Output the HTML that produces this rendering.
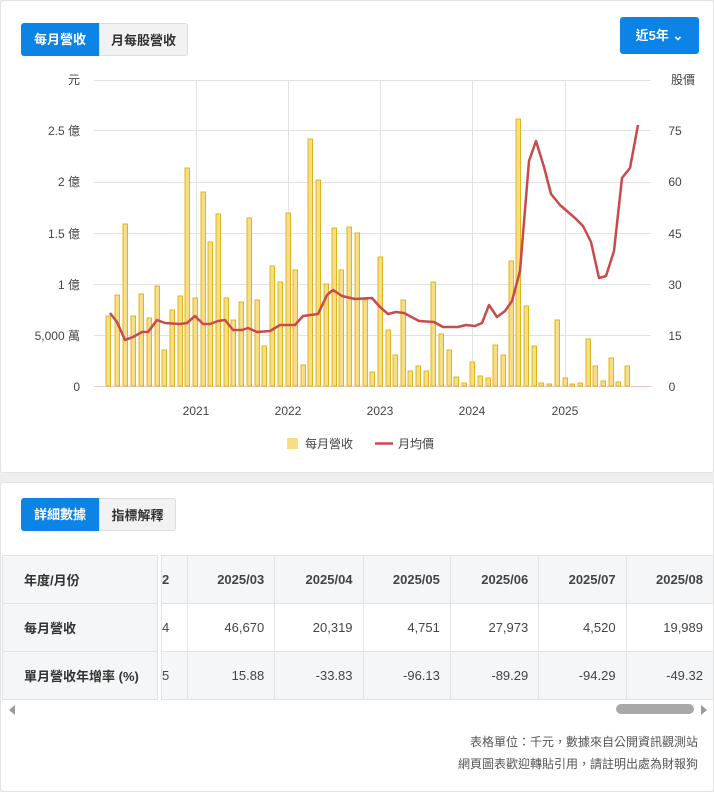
<!DOCTYPE html>
<html><head><meta charset="utf-8"><style>
*{box-sizing:border-box;margin:0;padding:0}
body{width:714px;height:787px;background:#eceeef;font-family:"Liberation Sans","Noto Sans CJK TC",sans-serif;color:#333;position:relative;overflow:hidden}
.card{position:absolute;left:0;width:714px;background:#fff;border:1px solid #e3e3e3;border-radius:3px}
.btn{position:absolute;height:33px;line-height:33px;font-size:13px;font-weight:bold;text-align:center}
.blue{background:#0b84e6;color:#fff}
.grey{background:#f2f2f2;color:#333;border:1px solid #ddd}
table{position:absolute;border-collapse:collapse;font-size:13px}
td{border:1px solid #e3e3e3;height:48px;text-align:right;padding-right:10px;color:#444}
.foot{position:absolute;right:16px;font-size:12px;color:#555}
</style></head><body>
<div class="card" style="top:0;height:473px">
<div class="btn blue" style="left:20px;top:22px;width:78px;border-radius:3px 0 0 3px">每月營收</div>
<div class="btn grey" style="left:98px;top:22px;width:89px;border-radius:0 3px 3px 0">月每股營收</div>
<div class="btn blue" style="left:619px;top:16px;width:79px;height:37px;line-height:37px;border-radius:3px">近5年 ⌄</div>
<svg width="714" height="473" style="position:absolute;left:-1px;top:-1px" font-family="Liberation Sans,Noto Sans CJK TC,sans-serif" font-size="12" fill="#444">
<g stroke="#e2e2e2" stroke-width="1">
<line x1="94" x2="651" y1="80.5" y2="80.5"/><line x1="94" x2="651" y1="130.5" y2="130.5"/><line x1="94" x2="651" y1="182.5" y2="182.5"/><line x1="94" x2="651" y1="233.5" y2="233.5"/><line x1="94" x2="651" y1="284.5" y2="284.5"/><line x1="94" x2="651" y1="335.5" y2="335.5"/>
<line x1="196.5" x2="196.5" y1="80" y2="386"/><line x1="288.5" x2="288.5" y1="80" y2="386"/><line x1="380.5" x2="380.5" y1="80" y2="386"/><line x1="472.5" x2="472.5" y1="80" y2="386"/><line x1="565.5" x2="565.5" y1="80" y2="386"/>
</g>
<line x1="94" x2="651" y1="386.5" y2="386.5" stroke="#e8c6cc"/>
<g text-anchor="end"><text x="80" y="84">元</text><text x="80" y="135">2.5 億</text><text x="80" y="186">2 億</text><text x="80" y="238">1.5 億</text><text x="80" y="289">1 億</text><text x="80" y="340">5,000 萬</text><text x="80" y="391">0</text></g>
<g text-anchor="middle"><text x="683" y="84">股價</text><text x="675" y="135">75</text><text x="675" y="186">60</text><text x="675" y="238">45</text><text x="675" y="289">30</text><text x="675" y="340">15</text><text x="672" y="391">0</text>
<text x="196" y="415">2021</text><text x="288" y="415">2022</text><text x="380" y="415">2023</text><text x="472" y="415">2024</text><text x="565" y="415">2025</text></g>
<g fill="#f7dd86" stroke="#e0b51c" stroke-width="1">
<rect x="106" y="316" width="4.5" height="70"/><rect x="115" y="295" width="4.5" height="91"/><rect x="123" y="224" width="4.5" height="162"/><rect x="131" y="316" width="4.5" height="70"/><rect x="139" y="294" width="4.5" height="92"/><rect x="147" y="318" width="4.5" height="68"/><rect x="155" y="286" width="4.5" height="100"/><rect x="162" y="350" width="4.5" height="36"/><rect x="170" y="310" width="4.5" height="76"/><rect x="178" y="296" width="4.5" height="90"/><rect x="185" y="168" width="4.5" height="218"/><rect x="193" y="298" width="4.5" height="88"/><rect x="201" y="192" width="4.5" height="194"/><rect x="208" y="242" width="4.5" height="144"/><rect x="216" y="214" width="4.5" height="172"/><rect x="224" y="298" width="4.5" height="88"/><rect x="231" y="320" width="4.5" height="66"/><rect x="239" y="302" width="4.5" height="84"/><rect x="247" y="218" width="4.5" height="168"/><rect x="255" y="300" width="4.5" height="86"/><rect x="262" y="346" width="4.5" height="40"/><rect x="270" y="266" width="4.5" height="120"/><rect x="278" y="282" width="4.5" height="104"/><rect x="286" y="213" width="4.5" height="173"/><rect x="293" y="270" width="4.5" height="116"/><rect x="301" y="365" width="4.5" height="21"/><rect x="308" y="139" width="4.5" height="247"/><rect x="316" y="180" width="4.5" height="206"/><rect x="324" y="284" width="4.5" height="102"/><rect x="332" y="228" width="4.5" height="158"/><rect x="339" y="270" width="4.5" height="116"/><rect x="347" y="227" width="4.5" height="159"/><rect x="355" y="233" width="4.5" height="153"/><rect x="363" y="300" width="4.5" height="86"/><rect x="370" y="372" width="4.5" height="14"/><rect x="378" y="257" width="4.5" height="129"/><rect x="386" y="330" width="4.5" height="56"/><rect x="393" y="355" width="4.5" height="31"/><rect x="401" y="300" width="4.5" height="86"/><rect x="408" y="371" width="4.5" height="15"/><rect x="416" y="366" width="4.5" height="20"/><rect x="424" y="371" width="4.5" height="15"/><rect x="431" y="282" width="4.5" height="104"/><rect x="439" y="334" width="4.5" height="52"/><rect x="447" y="350" width="4.5" height="36"/><rect x="454" y="377" width="4.5" height="9"/><rect x="462" y="383" width="4.5" height="3"/><rect x="470" y="362" width="4.5" height="24"/><rect x="478" y="376" width="4.5" height="10"/><rect x="486" y="378" width="4.5" height="8"/><rect x="493" y="345" width="4.5" height="41"/><rect x="501" y="355" width="4.5" height="31"/><rect x="509" y="261" width="4.5" height="125"/><rect x="516" y="119" width="4.5" height="267"/><rect x="524" y="306" width="4.5" height="80"/><rect x="532" y="346" width="4.5" height="40"/><rect x="539" y="383" width="4.5" height="3"/><rect x="547" y="384" width="4.5" height="2"/><rect x="555" y="320" width="4.5" height="66"/><rect x="563" y="378" width="4.5" height="8"/><rect x="570" y="384" width="4.5" height="2"/><rect x="578" y="383" width="4.5" height="3"/><rect x="586" y="339" width="4.5" height="47"/><rect x="593" y="366" width="4.5" height="20"/><rect x="601" y="381" width="4.5" height="5"/><rect x="609" y="358" width="4.5" height="28"/><rect x="616" y="382" width="4.5" height="4"/><rect x="625" y="366" width="4.5" height="20"/>
</g>
<polyline fill="none" stroke="#c94a4a" stroke-width="2.5" stroke-linejoin="round" points="110,313 117,322 125,340 133,337 142,332 148,332 157,320 165,323 180,324 187,323 195,316 203,324 210,324 218,321 225,320 233,330 242,330 248,328 257,332 270,331 280,325 295,325 303,316 318,314 327,295 333,290 342,296 355,299 372,298 380,307 388,314 396,312 404,313 419,321 434,322 443,327 458,327 466,325 475,326 482,323 489,305 497,317 505,311 512,301 520,271 529,161 536,141 544,167 551,194 560,205 568,212 576,219 583,226 591,242 599,278 606,276 614,251 622,178 630,168 638,125"/>
<rect x="287" y="438" width="11" height="11" fill="#f7dd86"/><text x="305" y="448" fill="#444">每月營收</text>
<line x1="375" x2="393" y1="443.5" y2="443.5" stroke="#c94a4a" stroke-width="2.5"/><text x="398" y="448" fill="#444">月均價</text>
</svg>
</div>
<div class="card" style="top:482px;height:310px">
<div class="btn blue" style="left:20px;top:15px;width:78px;border-radius:3px 0 0 3px">詳細數據</div>
<div class="btn grey" style="left:98px;top:15px;width:77px;border-radius:0 3px 3px 0">指標解釋</div>
</div>
<table style="left:161px;top:555px">
<tr style="background:#f5f6f7;font-weight:bold"><td style="width:26px;text-align:left;padding-left:0">2</td><td style="width:88px">2025/03</td><td style="width:89px">2025/04</td><td style="width:88px">2025/05</td><td style="width:89px">2025/06</td><td style="width:88px">2025/07</td><td style="width:88px">2025/08</td></tr>
<tr><td style="text-align:left;padding-left:0">4</td><td>46,670</td><td>20,319</td><td>4,751</td><td>27,973</td><td>4,520</td><td>19,989</td></tr>
<tr style="background:#f5f6f7"><td style="text-align:left;padding-left:0">5</td><td>15.88</td><td>-33.83</td><td>-96.13</td><td>-89.29</td><td>-94.29</td><td>-49.32</td></tr>
</table>
<table style="left:2px;top:555px;font-weight:bold;background:#f5f6f7">
<tr><td style="width:155px;text-align:left;padding-left:21px;color:#333">年度/月份</td></tr>
<tr><td style="text-align:left;padding-left:21px;color:#333">每月營收</td></tr>
<tr><td style="text-align:left;padding-left:21px;color:#333">單月營收年增率 (%)</td></tr>
</table>
<div style="position:absolute;left:9px;top:705px;width:0;height:0;border-top:5px solid transparent;border-bottom:5px solid transparent;border-right:6px solid #999"></div>
<div style="position:absolute;left:616px;top:704px;width:78px;height:10px;border-radius:5px;background:#a8a8a8"></div>
<div style="position:absolute;left:701px;top:705px;width:0;height:0;border-top:5px solid transparent;border-bottom:5px solid transparent;border-left:6px solid #999"></div>
<div class="foot" style="top:733px">表格單位：千元，數據來自公開資訊觀測站</div>
<div class="foot" style="top:755px">網頁圖表歡迎轉貼引用，請註明出處為財報狗</div>
</body></html>
